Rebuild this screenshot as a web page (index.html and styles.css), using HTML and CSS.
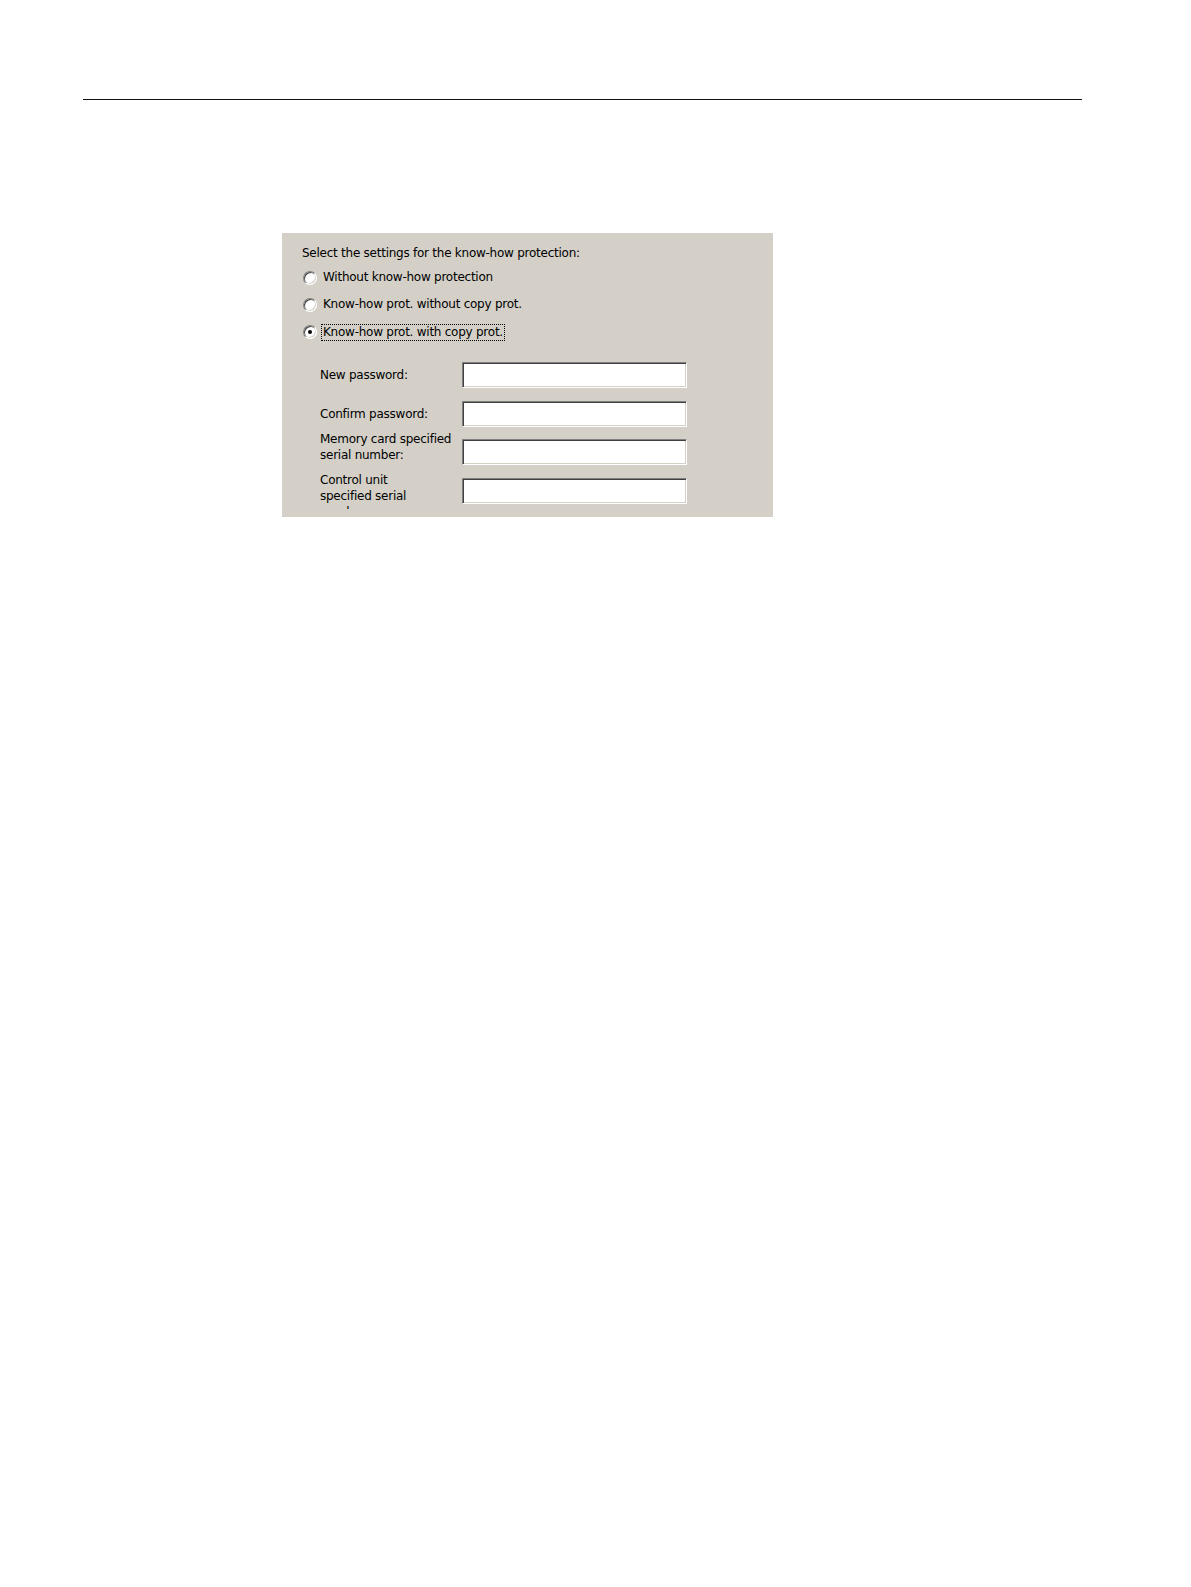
FILE: index.html
```html
<!DOCTYPE html>
<html>
<head>
<meta charset="utf-8">
<link rel="stylesheet" href="styles.css">
</head>
<body>
<div class="rule"></div>
<div class="dialog">
  <div class="title">Select the settings for the know-how protection:</div>
  <div class="options">
    <div class="option"><span class="radio"></span><span class="opt-label">Without know-how protection</span></div>
    <div class="option"><span class="radio"></span><span class="opt-label">Know-how prot. without copy prot.</span></div>
    <div class="option"><span class="radio checked"></span><span class="opt-label focus">Know-how prot. with copy prot.</span></div>
  </div>
  <div class="fields">
    <div class="field-label single">New password:</div>
    <div class="input"></div>
    <div class="field-label single">Confirm password:</div>
    <div class="input"></div>
    <div class="field-label double">Memory card specified<br>serial number:</div>
    <div class="input"></div>
    <div class="field-label triple">Control unit<br>specified serial<br>number:</div>
    <div class="input"></div>
  </div>
</div>
</body>
</html>
```

FILE: styles.css
```css
html, body {
  margin: 0;
  padding: 0;
  background: #ffffff;
}

body {
  font-family: "DejaVu Sans", Verdana, sans-serif;
  color: #000;
}

.rule {
  margin: 99px 0 0 83px;
  width: 999px;
  height: 1px;
  background: #111;
}

.dialog {
  margin: 133px 0 0 282px;
  width: 491px;
  height: 284px;
  background: #d4d0c8;
  overflow: hidden;
  box-sizing: border-box;
  padding-top: 12px;
  font-size: 12px;
  letter-spacing: -0.25px;
  line-height: 16px;
}

.title {
  padding-left: 20px;
  height: 16px;
}

.options {
  margin-top: 3px;
  padding-left: 21px;
}

.option {
  height: 27.4px;
  display: flex;
  align-items: center;
}

.radio {
  width: 12px;
  height: 12px;
  border-radius: 50%;
  background: #fff;
  border: 1px solid;
  border-color: #808080 #ffffff #ffffff #808080;
  box-shadow: inset 1px 1px 0 #404040, inset -1px -1px 0 #d4d0c8;
  position: relative;
  flex: none;
}

.radio.checked::after {
  content: "";
  position: absolute;
  left: 4px;
  top: 4px;
  width: 4px;
  height: 4px;
  border-radius: 50%;
  background: #000;
}

.opt-label {
  margin-left: 4px;
  border: 1px solid transparent;
  padding: 0 1px;
  line-height: 15.5px;
}

.opt-label.focus {
  border: 1px dotted #000;
}

.fields {
  margin-top: 15.7px;
  padding-left: 38px;
  display: grid;
  grid-template-columns: 142px 225px;
  grid-auto-rows: 38.8px;
  align-items: start;
}

.field-label {
  line-height: 15.7px;
}

.field-label.single {
  margin-top: 6.5px;
}

.field-label.double {
  margin-top: -7px;
}

.field-label.triple {
  margin-top: -5px;
  max-height: 36px;
  overflow: hidden;
}

.input {
  height: 26px;
  box-sizing: border-box;
  background: #fff;
  border: 1px solid;
  border-color: #808080 #ffffff #ffffff #808080;
  box-shadow: inset 1px 1px 0 #404040, inset -1px -1px 0 #d4d0c8;
}
```
